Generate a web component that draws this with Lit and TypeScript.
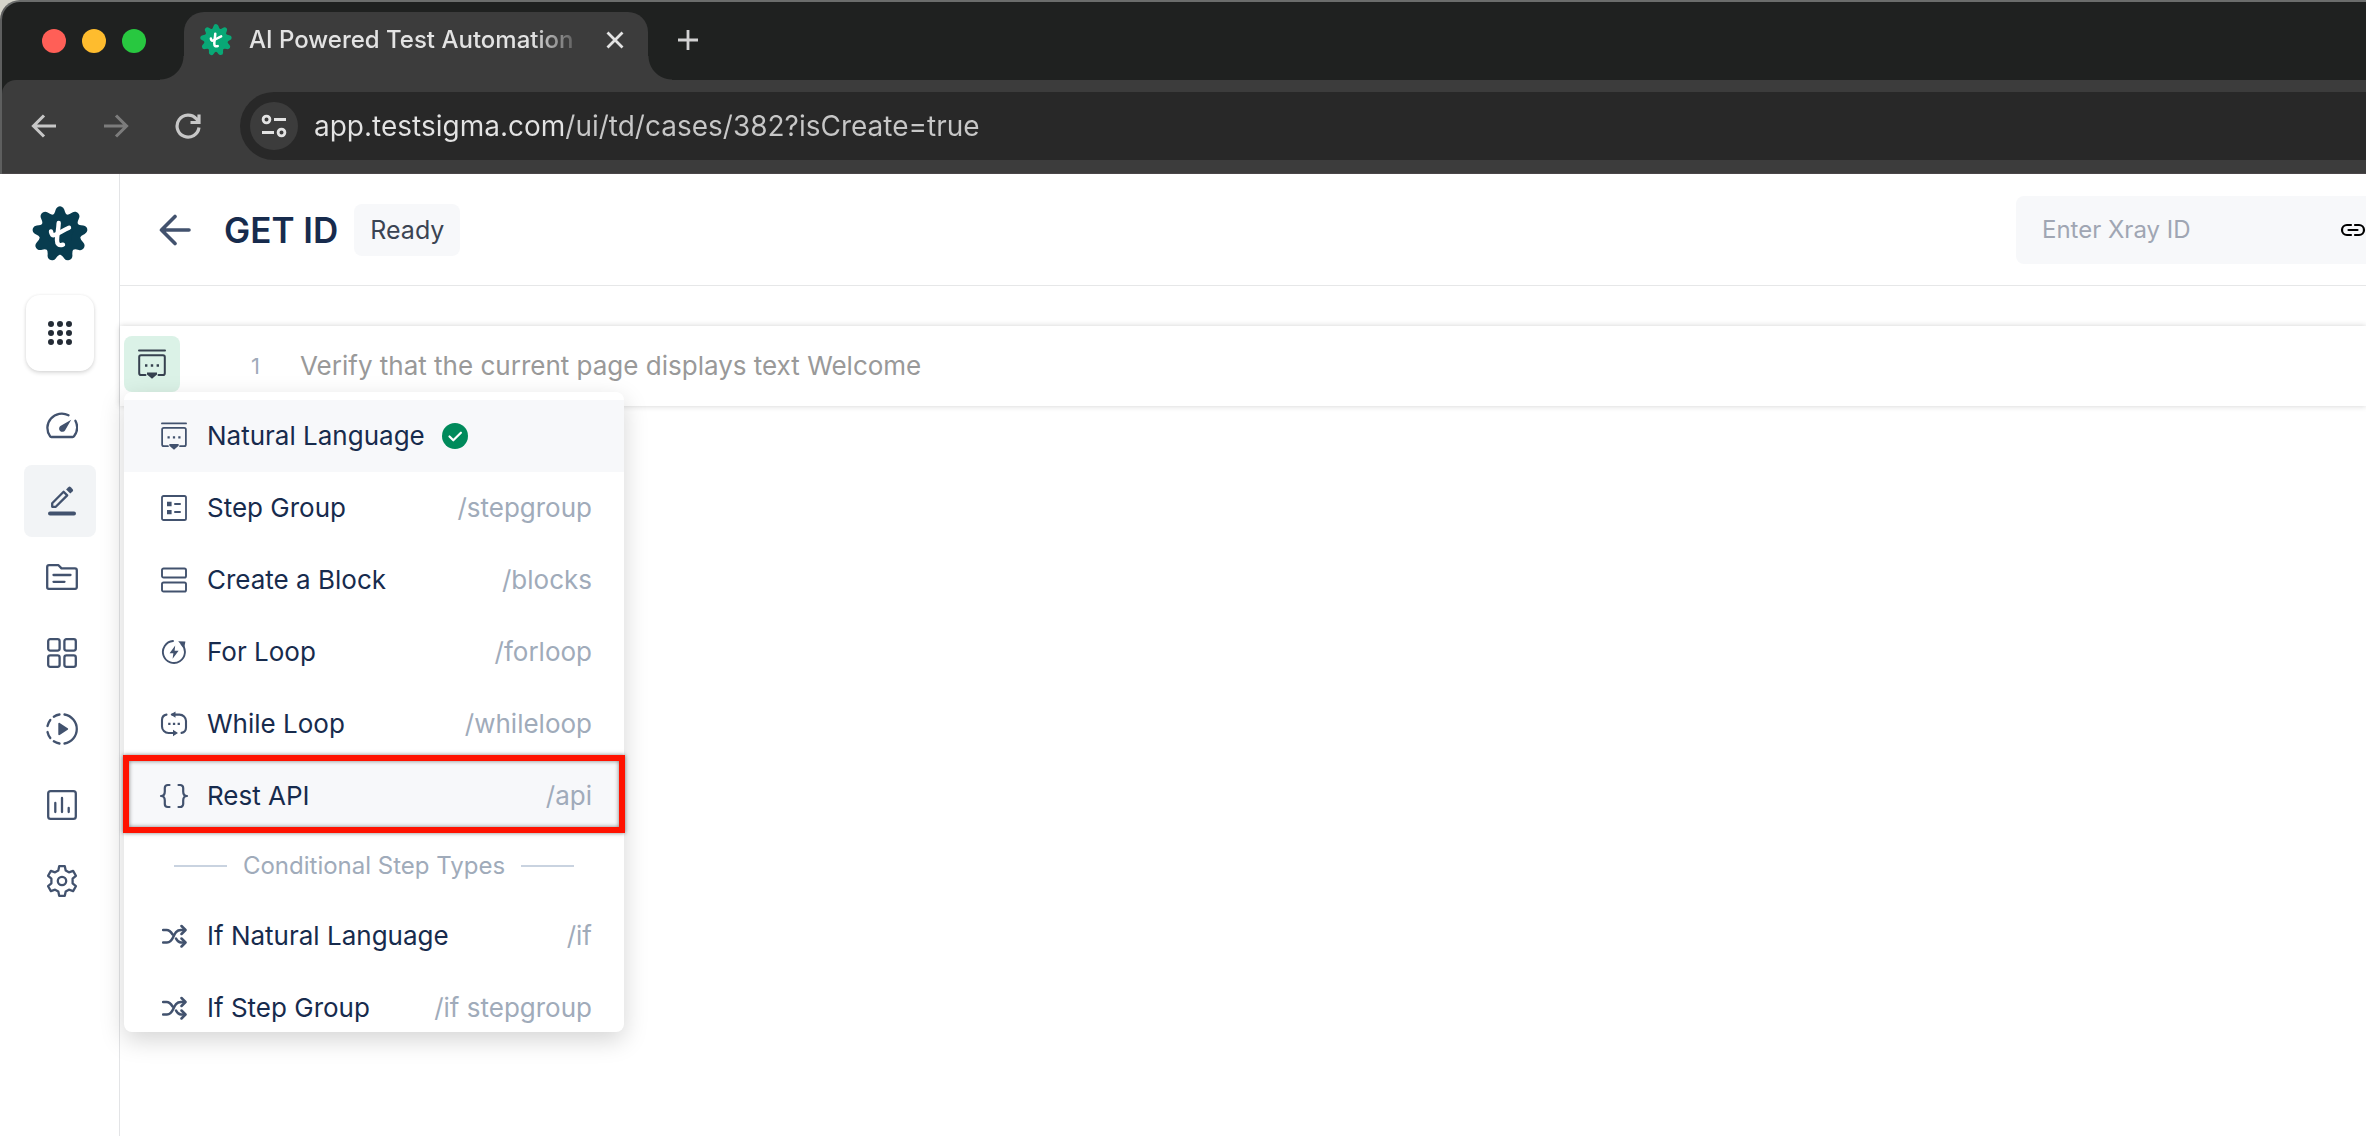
import { LitElement, html, css, svg, nothing } from "lit";
import { customElement, property } from "lit/decorators.js";
import { classMap } from "lit/directives/class-map.js";

/** Star of curved valleys centred on 0,0; a thick round-joined stroke turns its tips into lobes. */
function lobedOutline(lobes: number, tip: number, valley: number): string {
  const at = (turn: number, r: number) => {
    const a = (turn / lobes) * Math.PI * 2;
    return `${(Math.sin(a) * r).toFixed(2)} ${(-Math.cos(a) * r).toFixed(2)}`;
  };
  let path = `M${at(0, tip)}`;
  for (let i = 0; i < lobes; i++) {
    path += `Q${at(i + 0.5, valley)} ${at(i + 1, tip)}`;
  }
  return path + "Z";
}

const brandOutline = lobedOutline(9, 23.2, 10.5);

const chatStack = svg`
  <path d="M1 1.500h26"/>
  <path d="M7.500 26H3a1.800 1.800 0 0 1-1.800-1.800V8A1.800 1.800 0 0 1 3 6.200h22A1.800 1.800 0 0 1 26.800 8v16.200A1.800 1.800 0 0 1 25 26h-4.500"/>
  <path class="solid" d="M9 23.500h10v2L14 29.800l-5-4.300z"/>
  <path class="solid" d="M7 15.300h2.400v2.400H7zM12.800 15.300h2.400v2.400h-2.400zM18.600 15.300H21v2.400h-2.400z"/>`;

const shuffle = svg`
  <path d="M1 6h3.500c3.500 0 4.600 2 6 4.500M1 18.500h4c8 0 5-12.500 14-12.500h4M14 14.500c1.200 2.400 2.500 4 5 4h4"/>
  <path d="M19.500 2l4 4-4 4M19.500 14.500l4 4-4 4"/>`;

interface Glyph {
  box: string;
  w: number;
  h: number;
  stroke: number;
  art: unknown;
}

const glyphs: Record<string, Glyph> = {
  brand: {
    box: "-28 -28 56 56", w: 56, h: 56, stroke: 4.4,
    art: svg`<path class="lobes" d=${brandOutline}/>
      <g class="mark"><path d="M-1.300-11c-.3 7-1.700 12-1.700 17 0 4.200 1.700 6 6 4.700"/><path d="M-9-2.500c.4 2.200 1 3.700 2.600 3.700C-3.500 1 2.500-3.500 9-6.300"/></g>`,
  },
  apps: {
    box: "0 0 24 24", w: 24, h: 24, stroke: 0,
    art: svg`<path class="dots" d="M3 3h0M12 3h0M21 3h0M3 12h0M12 12h0M21 12h0M3 21h0M12 21h0M21 21h0"/>`,
  },
  gauge: {
    box: "0 0 32 28", w: 32, h: 28, stroke: 2.3,
    art: svg`<path d="M22.500 4.200A14.400 14.400 0 0 0 4 25.200a1.500 1.500 0 0 0 1.300.8h21.400a1.500 1.500 0 0 0 1.300-.8 14.400 14.400 0 0 0 1.400-15.400"/>
      <path class="solid" d="M25.200 8.800l-6.200 10.600a3.200 3.200 0 1 1-4.600-4.300z"/>`,
  },
  pencil: {
    box: "0 0 28 30", w: 28, h: 30, stroke: 2.3,
    art: svg`<path class="base" d="M2 27.500h24"/>
      <path d="M4.200 20.800v-3.600L15.600 5.800l3.600 3.600L7.800 20.800z"/><path class="solid" d="M20.300 1.200a1.800 1.800 0 0 1 2.500 0l1.700 1.700a1.800 1.800 0 0 1 0 2.500l-2.200 2.200-4.200-4.200z"/>`,
  },
  folder: {
    box: "0 0 32 26", w: 32, h: 26, stroke: 2.3,
    art: svg`<path d="M3 1.200h9.500l3 3.200H29a1.800 1.800 0 0 1 1.800 1.800v17a1.600 1.600 0 0 1-1.600 1.600H2.800a1.600 1.600 0 0 1-1.600-1.600V3A1.800 1.800 0 0 1 3 1.200z"/>
      <path d="M7.500 11h17M7.500 17.800h11"/>`,
  },
  tiles: {
    box: "0 0 30 30", w: 30, h: 30, stroke: 2.3,
    art: svg`<rect x="1.200" y="1.200" width="11.400" height="11.400" rx="2"/><rect x="17.400" y="1.200" width="11.400" height="11.400" rx="2"/>
      <rect x="1.200" y="17.400" width="11.400" height="11.400" rx="2"/><rect x="17.400" y="17.400" width="11.400" height="11.400" rx="2"/>`,
  },
  run: {
    box: "0 0 32 32", w: 32, h: 32, stroke: 2.3,
    art: svg`<path d="M18.500 1.500a14.700 14.700 0 0 1 0 29"/>
      <path d="M13.500 1.500a14.700 14.700 0 0 0-5.700 2.200M4.300 7A14.700 14.700 0 0 0 1.500 13M1.500 19a14.700 14.700 0 0 0 2.800 6M7.800 28.300a14.700 14.700 0 0 0 5.700 2.200"/>
      <path class="solid" d="M12.300 10.800c0-.8.700-1.200 1.400-.8l8 5.200c.6.400.6 1.200 0 1.600l-8 5.200c-.7.400-1.400 0-1.400-.8z"/>`,
  },
  chart: {
    box: "0 0 30 30", w: 30, h: 30, stroke: 2.3,
    art: svg`<rect x="1.200" y="1.200" width="27.600" height="27.600" rx="2.400"/><path d="M8.300 13v9M15 8v14M21.700 18v4"/>`,
  },
  gear: {
    box: "0 0 32 32", w: 32, h: 32, stroke: 2.3,
    art: svg`<path d="M13.200 1.200h5.600l.9 4.300 3.200 1.800 4.200-1.400 2.800 4.900-3.300 2.900v4.600l3.300 2.900-2.800 4.900-4.200-1.400-3.200 1.800-.9 4.300h-5.600l-.9-4.300-3.200-1.800-4.200 1.400-2.800-4.900 3.300-2.900v-4.600l-3.300-2.900 2.800-4.900 4.200 1.400 3.200-1.800z"/>
      <circle cx="16" cy="16" r="4.200"/>`,
  },
  back: { box: "0 0 32 32", w: 32, h: 32, stroke: 3.6, art: svg`<path d="M30 16H2.500M16 2.500L2.500 16 16 29.500"/>` },
  natural: { box: "0 0 28 30", w: 26, h: 28, stroke: 1.9, art: chatStack },
  naturalLarge: { box: "0 0 28 30", w: 28, h: 30, stroke: 2, art: chatStack },
  group: {
    box: "0 0 26 26", w: 26, h: 26, stroke: 1.8,
    art: svg`<rect x="1" y="1" width="24" height="24" rx="1.600"/><path d="M14 9h5M14 17h5" stroke-width="2"/>
      <path class="solid" d="M6 6.800h4.600v4.400H6zM6 14.900h4.600v4.400H6z"/>`,
  },
  block: {
    box: "0 0 26 26", w: 26, h: 26, stroke: 1.9,
    art: svg`<rect x="1" y="1.500" width="24" height="9" rx="1.600"/><rect x="1" y="15.500" width="24" height="9" rx="1.600"/>`,
  },
  forLoop: {
    box: "0 0 26 26", w: 26, h: 26, stroke: 1.9,
    art: svg`<path d="M12 2A11 11 0 1 0 20.500 5"/><path class="solid" d="M17.200 2.200l7.200.2-1.200 6.800z"/>
      <path class="solid" d="M14.200 6.500L8.600 14.200h3.800l-.8 5.600 6-8h-4z"/>`,
  },
  whileLoop: {
    box: "0 0 28 26", w: 28, h: 26, stroke: 2.1,
    art: svg`<path d="M6.500 3.600A5.500 5.500 0 0 0 2 9v6.500A6.500 6.500 0 0 0 8.500 22H14M12 3.600h7.500A6.500 6.500 0 0 1 26 10v6.500a5.500 5.500 0 0 1-4.500 5.400"/>
      <path class="solid" d="M15.500.4v6.400l-5-3.200zM13 18.800v6.400l5-3.200z"/>
      <path class="solid" d="M8.200 11.700h2.300V14H8.200zM12.900 11.700h2.300V14h-2.300zM17.600 11.700h2.300V14h-2.300z"/>`,
  },
  braces: {
    box: "0 0 30 26", w: 30, h: 26, stroke: 2.2,
    art: svg`<path d="M10.500 2H8.800a3 3 0 0 0-3 3v3.500c0 2-1 4.500-3.800 4.500 2.800 0 3.800 2.500 3.800 4.500V21a3 3 0 0 0 3 3h1.700M19.500 2h1.700a3 3 0 0 1 3 3v3.500c0 2 1 4.500 3.800 4.500-2.800 0-3.800 2.500-3.800 4.500V21a3 3 0 0 1-3 3h-1.700"/>`,
  },
  shuffle: { box: "0 0 25 25", w: 25, h: 25, stroke: 2.5, art: shuffle },
  check: {
    box: "0 0 26 26", w: 26, h: 26, stroke: 2.2,
    art: svg`<circle class="solid" cx="13" cy="13" r="13"/><g class="mark"><path d="M7.500 13.500l3.800 3.800 7.600-7.600"/></g>`,
  },
  link: {
    box: "0 0 26 14", w: 26, h: 14, stroke: 2.2,
    art: svg`<path d="M11 2H7a5 5 0 0 0 0 10h4M15 2h4a5 5 0 0 1 0 10h-4M8.500 7h9"/>`,
  },
  navBack: { box: "0 0 28 28", w: 28, h: 28, stroke: 3.1, art: svg`<path class="square" d="M26 14H4M14 3.500L3.500 14 14 24.500"/>` },
  navForward: { box: "0 0 28 28", w: 28, h: 28, stroke: 3.1, art: svg`<path class="square" d="M2 14h22M14 3.500L24.500 14 14 24.500"/>` },
  reload: {
    box: "0 0 28 28", w: 28, h: 28, stroke: 3.2,
    art: svg`<path class="square" d="M25 15.500A11 11 0 1 1 22.500 7L25 10M25 2.500v8h-8.500"/>`,
  },
  tune: {
    box: "0 0 26 26", w: 26, h: 26, stroke: 2.8,
    art: svg`<path class="square" d="M13 6.500h12M1 19.500h12"/><circle cx="5.500" cy="6.500" r="3.400"/><circle cx="20.500" cy="19.500" r="3.400"/>`,
  },
  close: { box: "0 0 18 18", w: 18, h: 18, stroke: 2.8, art: svg`<path class="square" d="M1.500 1.500l15 15M16.500 1.500l-15 15"/>` },
  plus: { box: "0 0 22 22", w: 22, h: 22, stroke: 2.8, art: svg`<path class="square" d="M11 1v20M1 11h20"/>` },
};

@customElement("ui-glyph")
export class UiGlyph extends LitElement {
  @property() name = "";
  @property({ type: Number }) size = 0;

  static styles = css`
    :host { display: inline-flex; flex: none; }
    svg { display: block; fill: none; stroke: currentColor; stroke-linecap: round; stroke-linejoin: round; }
    .solid { fill: currentColor; stroke: none; }
    .lobes { fill: currentColor; stroke-width: 9; }
    .mark { stroke: #fff; }
    .dots { stroke-width: 6; }
    .base { stroke-width: 4; }
    .square { stroke-linecap: butt; stroke-linejoin: miter; }
  `;

  render() {
    const g = glyphs[this.name];
    if (!g) return nothing;
    return html`<svg viewBox=${g.box} width=${this.size || g.w} height=${this.size || g.h}
      stroke-width=${g.stroke} aria-hidden="true">${g.art}</svg>`;
  }
}

@customElement("browser-chrome")
export class BrowserChrome extends LitElement {
  static styles = css`
    :host { display: block; background: #d5d4cb; }
    .window {
      border-top: 2px solid #6b6d6c;
      border-left: 2px solid #5e5f5f;
      border-radius: 20px 0 0 0;
      background: #1f2120;
    }
    button { border: 0; padding: 0; background: none; color: inherit; display: inline-flex; align-items: center; justify-content: center; }
    .strip { display: flex; align-items: flex-end; height: 78px; }
    .lights { display: flex; gap: 16px; align-self: center; padding: 0 38px 0 40px; }
    .light { width: 24px; height: 24px; border-radius: 50%; }
    .red { background: #ff5f57; }
    .amber { background: #febc2e; }
    .green { background: #28c840; }
    .tab {
      position: relative;
      box-sizing: border-box;
      display: flex;
      align-items: center;
      width: 464px;
      height: 68px;
      padding: 0 24px 12px 16px;
      border-radius: 20px 20px 0 0;
      background: #3c3c3c;
      color: #e3e3e3;
    }
    .tab::before, .tab::after {
      content: "";
      position: absolute;
      bottom: 0;
      width: 24px;
      height: 24px;
    }
    .tab::before { right: 100%; background: radial-gradient(circle at 0 0, transparent 23px, #3c3c3c 24px); }
    .tab::after { left: 100%; background: radial-gradient(circle at 100% 0, transparent 23px, #3c3c3c 24px); }
    .favicon { color: #09a876; }
    .title {
      flex: 1;
      margin: 0 20px 0 17px;
      white-space: nowrap;
      font: 500 24px/32px Inter, sans-serif;
      mask-image: linear-gradient(to right, #000 84%, transparent);
    }
    .new { width: 32px; height: 32px; margin: 0 0 24px 24px; color: #d2d2d2; }
    .bar {
      display: flex;
      align-items: center;
      height: 94px;
      box-sizing: border-box;
      padding: 12px 0 14px 28px;
      border-bottom: 1px solid #4a4648;
      border-radius: 14px 0 0 0;
      background: #3c3c3c;
      color: #c7c7c7;
    }
    .nav { display: flex; gap: 44px; }
    .off { color: #7c7c7c; }
    .address {
      flex: 1;
      display: flex;
      align-items: center;
      gap: 16px;
      height: 68px;
      margin-left: 38px;
      padding-left: 10px;
      border-radius: 34px 0 0 34px;
      background: #282828;
    }
    .site { width: 48px; height: 48px; border-radius: 50%; background: #3c3c3c; color: #e3e3e3; }
    .url {
      flex: 1;
      min-width: 0;
      padding: 0;
      border: 0;
      outline: 0;
      font: 400 28px/40px Inter, sans-serif;
      background: linear-gradient(to right, #e3e3e3 251px, #c7c7c7 251px);
      background-clip: text;
      -webkit-text-fill-color: transparent;
      color: #c7c7c7;
    }
  `;

  render() {
    return html`
      <div class="window">
        <div class="strip">
          <div class="lights">
            <button class="light red" aria-label="Close window"></button>
            <button class="light amber" aria-label="Minimise window"></button>
            <button class="light green" aria-label="Zoom window"></button>
          </div>
          <div class="tab">
            <ui-glyph class="favicon" name="brand" size="32"></ui-glyph>
            <span class="title">AI Powered Test Automation</span>
            <button aria-label="Close tab"><ui-glyph name="close"></ui-glyph></button>
          </div>
          <button class="new" aria-label="New tab"><ui-glyph name="plus"></ui-glyph></button>
        </div>
        <div class="bar">
          <nav class="nav">
            <button aria-label="Back"><ui-glyph name="navBack"></ui-glyph></button>
            <button class="off" aria-label="Forward"><ui-glyph name="navForward"></ui-glyph></button>
            <button aria-label="Reload"><ui-glyph name="reload"></ui-glyph></button>
          </nav>
          <div class="address">
            <button class="site" aria-label="Site settings"><ui-glyph name="tune"></ui-glyph></button>
            <input class="url" aria-label="Address" value="app.testsigma.com/ui/td/cases/382?isCreate=true" />
          </div>
        </div>
      </div>`;
  }
}

@customElement("side-nav")
export class SideNav extends LitElement {
  static styles = css`
    :host { display: flex; flex-direction: column; align-items: center; box-sizing: border-box; padding-top: 32px; border-right: 1px solid #e3e4e6; background: #fff; }
    .logo { color: #083c4f; }
    .apps {
      display: flex; align-items: center; justify-content: center;
      width: 68px; height: 76px; margin: 33px 0 18px; padding: 0;
      border: 0; border-radius: 14px; background: #fff; color: #242c36;
      box-shadow: 0 2px 4px rgba(0, 0, 0, 0.14), 0 0 3px rgba(0, 0, 0, 0.06);
    }
    .list { display: flex; flex-direction: column; gap: 4px; }
    .item { display: flex; align-items: center; justify-content: center; box-sizing: border-box; width: 72px; height: 72px; padding-left: 4px; border-radius: 8px; color: #42526e; }
    .active { background: #f2f4f6; }
  `;

  render() {
    const items = [
      ["gauge", "Dashboard"], ["pencil", "Create tests"], ["folder", "Test data"], ["tiles", "Test suites"],
      ["run", "Runs"], ["chart", "Reports"], ["gear", "Settings"],
    ];
    return html`
      <ui-glyph class="logo" name="brand"></ui-glyph>
      <button class="apps" aria-label="Apps"><ui-glyph name="apps"></ui-glyph></button>
      <nav class="list">
        ${items.map(([icon, label]) => html`
          <a href="#" aria-label=${label} class=${classMap({ item: true, active: icon === "pencil" })}>
            <ui-glyph name=${icon}></ui-glyph>
          </a>`)}
      </nav>`;
  }
}

interface StepType {
  icon: string;
  label: string;
  hint?: string;
  state?: "selected" | "hover";
}

const stepTypes: StepType[] = [
  { icon: "natural", label: "Natural Language", state: "selected" },
  { icon: "group", label: "Step Group", hint: "/stepgroup" },
  { icon: "block", label: "Create a Block", hint: "/blocks" },
  { icon: "forLoop", label: "For Loop", hint: "/forloop" },
  { icon: "whileLoop", label: "While Loop", hint: "/whileloop" },
  { icon: "braces", label: "Rest API", hint: "/api", state: "hover" },
];

const conditionalTypes: StepType[] = [
  { icon: "shuffle", label: "If Natural Language", hint: "/if" },
  { icon: "shuffle", label: "If Step Group", hint: "/if stepgroup" },
];

@customElement("step-menu")
export class StepMenu extends LitElement {
  static styles = css`
    :host { display: block; width: 500px; }
    .menu {
      box-sizing: border-box; height: 640px; padding-top: 8px; overflow: hidden;
      border-radius: 8px; background: #fff;
      box-shadow: 0 8px 24px rgba(0, 0, 0, 0.17);
    }
    .item {
      display: flex; align-items: center; box-sizing: border-box;
      width: 100%; height: 72px; padding: 0 32px 0 34px; border: 0;
      background: none; color: #172b4d; text-align: left;
      font: 400 26px/32px Inter, sans-serif;
    }
    .tinted { background: #f7f8fa; }
    .icon { display: flex; justify-content: center; width: 32px; margin-right: 17px; color: #42526e; }
    .tick { margin-left: 17px; color: #008a5b; }
    .hint { margin-left: auto; color: #a0abba; }
    .divider {
      display: flex; align-items: center; gap: 16px;
      height: 68px; padding: 0 50px;
      color: #a0abba; font: 400 24px/32px Inter, sans-serif; white-space: nowrap;
    }
    .divider::before, .divider::after { content: ""; flex: 1; height: 2px; background: #c9d3e0; }
    .callout {
      position: absolute; top: 363px; left: -1px; right: -1px; height: 78px;
      box-sizing: border-box; border: 6px solid #ff1200; pointer-events: none;
      box-shadow: 0 0 4px rgba(0, 0, 0, 0.5), inset 0 0 4px rgba(0, 0, 0, 0.5);
    }
  `;

  private row(step: StepType) {
    return html`
      <button role="menuitem" class=${classMap({ item: true, tinted: !!step.state })}>
        <span class="icon"><ui-glyph name=${step.icon}></ui-glyph></span>
        <span>${step.label}</span>
        ${step.state === "selected" ? html`<ui-glyph class="tick" name="check"></ui-glyph>` : nothing}
        ${step.hint ? html`<span class="hint">${step.hint}</span>` : nothing}
      </button>`;
  }

  render() {
    return html`
      <div class="menu" role="menu">
        ${stepTypes.map((s) => this.row(s))}
        <div class="divider" role="presentation">Conditional Step Types</div>
        ${conditionalTypes.map((s) => this.row(s))}
      </div>
      <div class="callout"></div>`;
  }
}

@customElement("app-root")
export class AppRoot extends LitElement {
  static styles = css`
    :host { display: flex; flex-direction: column; min-height: 100vh; overflow: hidden; background: #fff; font-family: Inter, sans-serif; }
    .body { flex: 1; display: grid; grid-template-columns: 120px minmax(0, 1fr); }
    .main { min-width: 0; }
    button, input { font-family: inherit; border: 0; outline: 0; }
    .header { display: flex; align-items: center; height: 111px; border-bottom: 1px solid #e6e7e8; }
    .back { display: flex; margin-left: 39px; padding: 0; background: none; color: #42526e; }
    .title { margin: 0 16px 0 33px; font-size: 35px; line-height: 44px; font-weight: 600; color: #172b4d; }
    .status { padding: 10px 16px; border-radius: 8px; background: #f7f8fa; color: #3b4453; font-size: 25px; line-height: 32px; }
    .xray { display: flex; align-items: center; box-sizing: border-box; width: 350px; height: 68px; margin-left: auto; padding-left: 26px; border-radius: 8px 0 0 8px; background: #f7f8fa; }
    .xray-id { flex: 1; min-width: 0; padding: 0; background: none; font-size: 24px; line-height: 32px; color: #172b4d; }
    .xray-id::placeholder { color: #a0a6b3; }
    .attach { display: flex; padding: 0; background: none; color: #000; }
    .step {
      position: relative; display: flex; align-items: center;
      height: 80px; margin-top: 40px; padding-left: 4px; background: #fff;
      box-shadow: 0 0 6px rgba(0, 0, 0, 0.18);
    }
    .kind { display: flex; align-items: center; justify-content: center; width: 56px; height: 56px; margin-bottom: 4px; padding: 0; border-radius: 8px; background: #dbf2e7; color: #36414f; }
    .number { width: 80px; text-align: right; color: #a0abba; font-size: 22px; line-height: 32px; }
    .text { flex: 1; min-width: 0; margin-left: 40px; padding: 0; background: none; font-size: 26px; line-height: 32px; color: #172b4d; }
    .text::placeholder { color: #999; }
    .popup { position: absolute; top: 66px; left: 4px; }
  `;

  render() {
    return html`
      <browser-chrome></browser-chrome>
      <div class="body">
        <side-nav></side-nav>
        <main class="main">
          <header class="header">
            <button class="back" aria-label="Back to test cases"><ui-glyph name="back"></ui-glyph></button>
            <h1 class="title">GET ID</h1>
            <span class="status">Ready</span>
            <div class="xray">
              <input class="xray-id" aria-label="Xray ID" placeholder="Enter Xray ID" />
              <button class="attach" aria-label="Link Xray ID"><ui-glyph name="link"></ui-glyph></button>
            </div>
          </header>
          <section class="step">
            <button class="kind" aria-label="Step type" aria-haspopup="menu"><ui-glyph name="naturalLarge"></ui-glyph></button>
            <span class="number">1</span>
            <input class="text" aria-label="Step 1" placeholder="Verify that the current page displays text Welcome" />
            <step-menu class="popup"></step-menu>
          </section>
        </main>
      </div>`;
  }
}
